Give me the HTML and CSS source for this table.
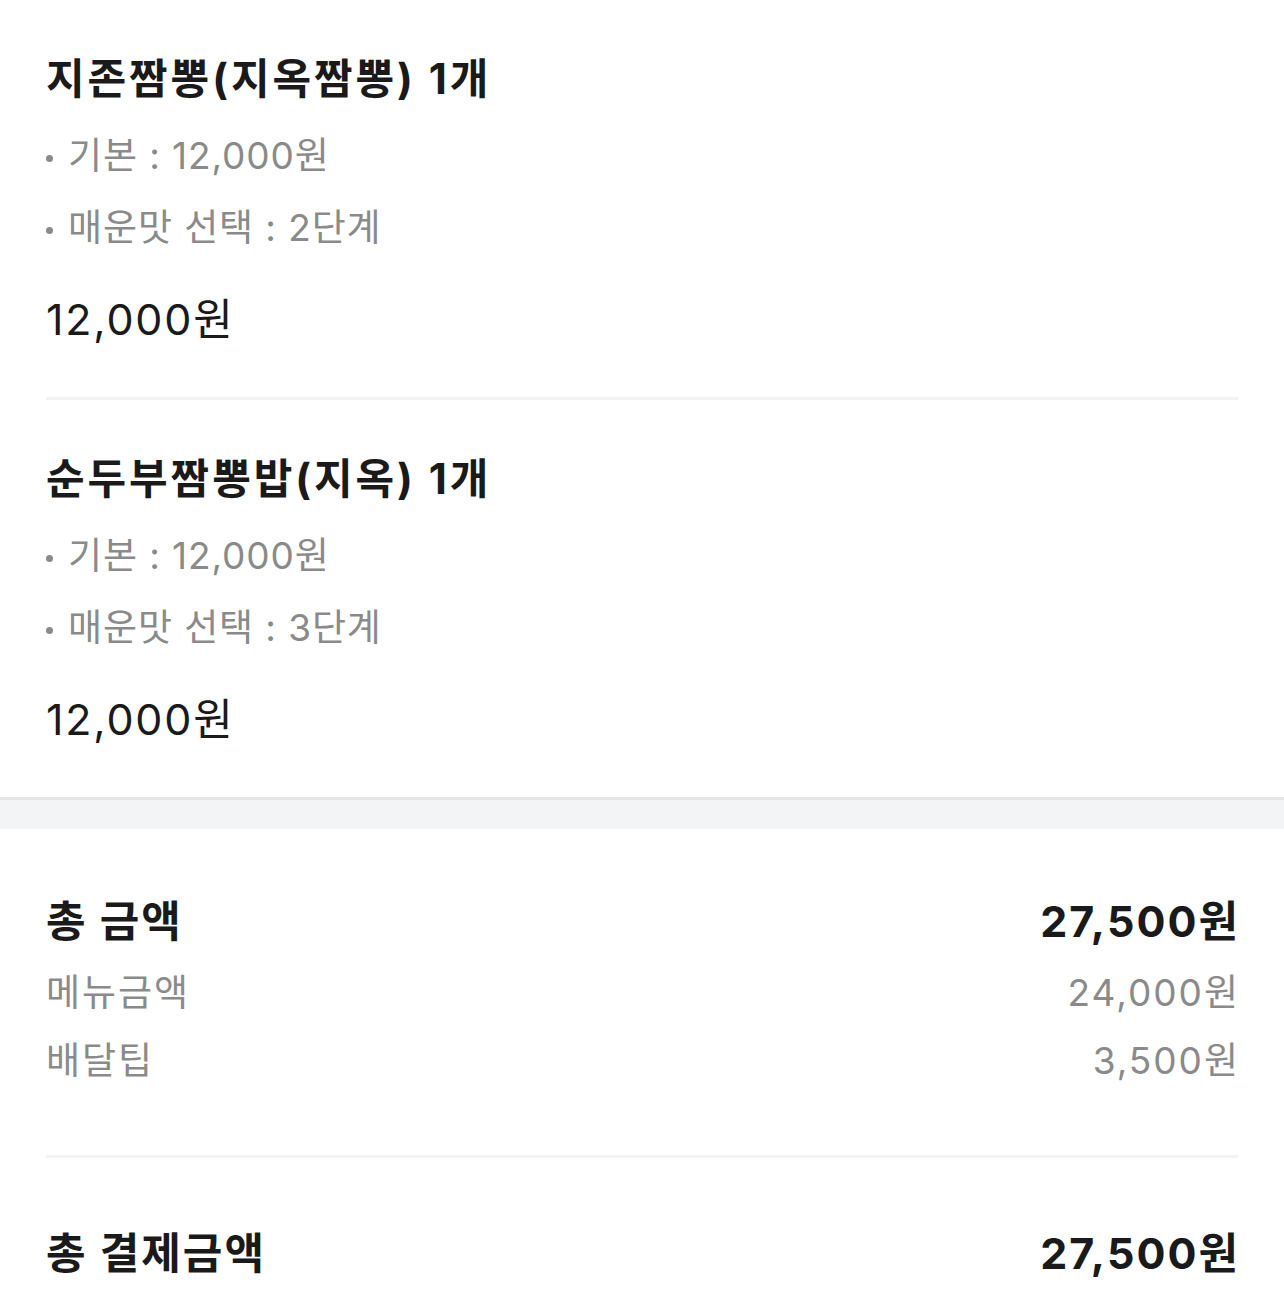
FILE: index.html
```html
<!DOCTYPE html>
<html lang="ko">
<head>
<meta charset="utf-8">
<title>주문 내역</title>
<link rel="stylesheet" href="styles.css">
</head>
<body>
<section class="items">
  <div class="item">
    <div class="item-title">지존짬뽕(지옥짬뽕) 1개</div>
    <ul class="options">
      <li>기본 : 12,000원</li>
      <li>매운맛 선택 : 2단계</li>
    </ul>
    <div class="item-price">12,000원</div>
  </div>
  <div class="divider"></div>
  <div class="item">
    <div class="item-title">순두부짬뽕밥(지옥) 1개</div>
    <ul class="options">
      <li>기본 : 12,000원</li>
      <li>매운맛 선택 : 3단계</li>
    </ul>
    <div class="item-price">12,000원</div>
  </div>
</section>
<div class="band"></div>
<section class="summary">
  <div class="row row-total">
    <span>총 금액</span>
    <span class="amount">27,500원</span>
  </div>
  <div class="row row-sub">
    <span>메뉴금액</span>
    <span class="amount">24,000원</span>
  </div>
  <div class="row row-sub">
    <span>배달팁</span>
    <span class="amount">3,500원</span>
  </div>
  <div class="divider divider-summary"></div>
  <div class="row row-total row-pay">
    <span>총 결제금액</span>
    <span class="amount">27,500원</span>
  </div>
</section>
</body>
</html>
```

FILE: styles.css
```css
html, body {
  margin: 0;
  padding: 0;
  background: #ffffff;
}

body {
  font-family: Inter, "Noto Sans CJK KR", sans-serif;
  color: #1a1a1a;
}

.items {
  padding: 0 46px;
}

.item {
  padding: 49px 0 50px;
}

.item-title {
  font-size: 42px;
  font-weight: 700;
  line-height: 59px;
  letter-spacing: 2.9px;
  color: #1a1a1a;
}

.options {
  list-style: none;
  margin: 12px 0 0;
  padding: 0;
}

.options li {
  font-size: 37px;
  line-height: 72px;
  color: #8a8a8a;
  letter-spacing: 0.9px;
  display: flex;
  align-items: center;
}

.options li::before {
  content: "";
  flex: none;
  width: 7px;
  height: 7px;
  border-radius: 50%;
  background: #8a8a8a;
  margin: 4px 15px 0 0;
}

.item-price {
  margin-top: 27px;
  font-size: 43px;
  line-height: 56px;
  letter-spacing: 1.8px;
  color: #1a1a1a;
}

.divider {
  height: 3px;
  background: #f2f3f5;
}

.band {
  height: 29px;
  background: #f3f4f6;
  border-top: 3px solid #e3e4e6;
}

.summary {
  padding: 64px 46px 30px;
}

.row {
  display: flex;
  justify-content: space-between;
  align-items: center;
}

.row-total {
  font-size: 43px;
  font-weight: 700;
  line-height: 56px;
  letter-spacing: 2px;
  color: #1a1a1a;
}

.row-total .amount {
  margin-right: -2px;
}

.row-sub {
  font-size: 37px;
  line-height: 68px;
  letter-spacing: 2px;
  color: #8a8a8a;
}

.row-sub .amount {
  margin-right: -2px;
}

.row-total + .row-sub {
  margin-top: 10px;
}

.divider-summary {
  margin-top: 60px;
}

.row-pay {
  margin-top: 67px;
}
```
